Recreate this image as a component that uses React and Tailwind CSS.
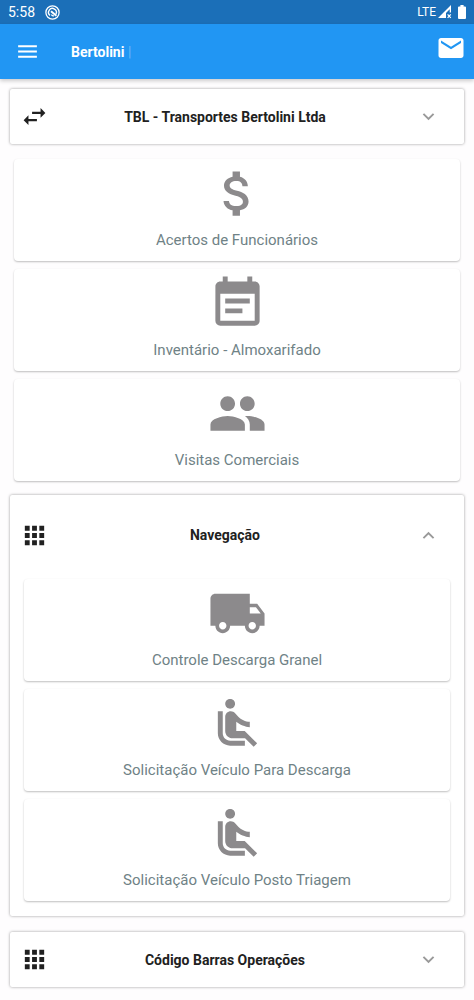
import { useState } from "react";
import {
  MdAirlineSeatReclineNormal,
  MdApps,
  MdAttachMoney,
  MdEventNote,
  MdExpandLess,
  MdExpandMore,
  MdLocalShipping,
  MdMail,
  MdMenu,
  MdPeople,
  MdSwapHoriz,
} from "react-icons/md";

const mainItems = [
  { label: "Acertos de Funcionários", icon: MdAttachMoney },
  { label: "Inventário - Almoxarifado", icon: MdEventNote },
  { label: "Visitas Comerciais", icon: MdPeople },
];

const navItems = [
  { label: "Controle Descarga Granel", icon: MdLocalShipping },
  { label: "Solicitação Veículo Para Descarga", icon: MdAirlineSeatReclineNormal },
  { label: "Solicitação Veículo Posto Triagem", icon: MdAirlineSeatReclineNormal },
];

const StatusBar = () => (
  <div className="h-6 bg-[#1b6fb8] text-white flex items-center justify-between px-2">
    <div className="flex items-center gap-[10px]">
      <span className="text-sm">5:58</span>
      <svg className="size-[15px]" viewBox="0 0 15 15" fill="none" stroke="currentColor">
        <circle cx="7.5" cy="7.5" r="6.6" strokeWidth="1.3" />
        <path d="M5 10.4A3.9 3.9 0 1 1 10.9 9.2" strokeWidth="1.4" />
        <path d="M6 6.2l5.4 4.6" strokeWidth="2" />
        <path d="M6.4 9.6a2.6 2.6 0 0 0 2.6 1.2" strokeWidth="1.2" />
      </svg>
    </div>
    <div className="flex items-center">
      <span className="text-xs">LTE</span>
      <svg className="size-[14px] ml-[2px]" viewBox="0 0 14 14" fill="currentColor">
        <path d="M13 0v7.5h-1.3V4.2L8 8v5H0z" />
        <path d="M9.6 9.4l3.2 3.4M12.8 9.4l-3.2 3.4" stroke="currentColor" strokeWidth="1.2" />
      </svg>
      <svg className="w-2 h-[14px] ml-[6px]" viewBox="0 0 8 14" fill="currentColor">
        <path d="M2.4 0h3.2v1.4H7a1 1 0 0 1 1 1V13a1 1 0 0 1-1 1H1a1 1 0 0 1-1-1V2.4a1 1 0 0 1 1-1h1.4z" />
      </svg>
    </div>
  </div>
);

const AppBar = () => (
  <header className="relative h-[55px] bg-[#2196f3] text-white flex items-center pl-[15px] pr-2 shadow-[0_2px_4px_rgba(0,0,0,0.2)]">
    <button aria-label="Menu">
      <MdMenu className="size-[25px]" />
    </button>
    <h1 className="ml-[31px] flex-1 text-sm font-bold">
      Bertolini <span className="font-normal opacity-30">|</span>
    </h1>
    <button aria-label="Mensagens" className="mb-2">
      <MdMail className="size-[30px]" />
    </button>
  </header>
);

const MenuCard = ({ label, icon: Icon }) => (
  <button className="w-full flex flex-col items-center pt-[5px] pb-[11px] bg-white rounded-[4px] shadow-[0_1px_2px_rgba(0,0,0,0.25)]">
    <Icon className="size-[59px] text-[#8c8a8c]" />
    <span className="mt-[7px] text-[15px] leading-5 text-[#6f8286]">{label}</span>
  </button>
);

const Panel = ({ title, icon: Icon, defaultOpen = false, children }) => {
  const [open, setOpen] = useState(defaultOpen);
  const Chevron = open ? MdExpandLess : MdExpandMore;

  return (
    <section className="bg-white rounded-[2px] shadow-[0_0_3px_rgba(0,0,0,0.4)]">
      <button
        className={`w-full flex items-center pl-[10px] pr-[9px] ${open ? "h-20" : "h-[55px]"}`}
        aria-expanded={open}
        onClick={() => setOpen(!open)}
      >
        <Icon className="size-[29px] text-[#212121]" />
        <span className="flex-1 text-center text-sm font-bold text-[#212121]">
          {title}
        </span>
        <span className="w-[54px] flex justify-center text-[#9a9a9a]">
          <Chevron className="size-[23px]" />
        </span>
      </button>
      {open && children && (
        <div className="flex flex-col gap-2 px-[14px] pt-1 pb-[15px]">{children}</div>
      )}
    </section>
  );
};

const App = () => {
  return (
    <div className="min-h-screen bg-[#fefdfe] font-[Roboto,sans-serif]">
      <StatusBar />
      <AppBar />
      <main className="px-[10px] pt-[10px] pb-3">
        <Panel title="TBL - Transportes Bertolini Ltda" icon={MdSwapHoriz} />
        <div className="flex flex-col gap-2 px-1 pt-[15px] pb-[14px]">
          {mainItems.map((item) => (
            <MenuCard key={item.label} {...item} />
          ))}
        </div>
        <div className="flex flex-col gap-4">
          <Panel title="Navegação" icon={MdApps} defaultOpen>
            {navItems.map((item) => (
              <MenuCard key={item.label} {...item} />
            ))}
          </Panel>
          <Panel title="Código Barras Operações" icon={MdApps} />
        </div>
      </main>
    </div>
  );
};

export default App;
